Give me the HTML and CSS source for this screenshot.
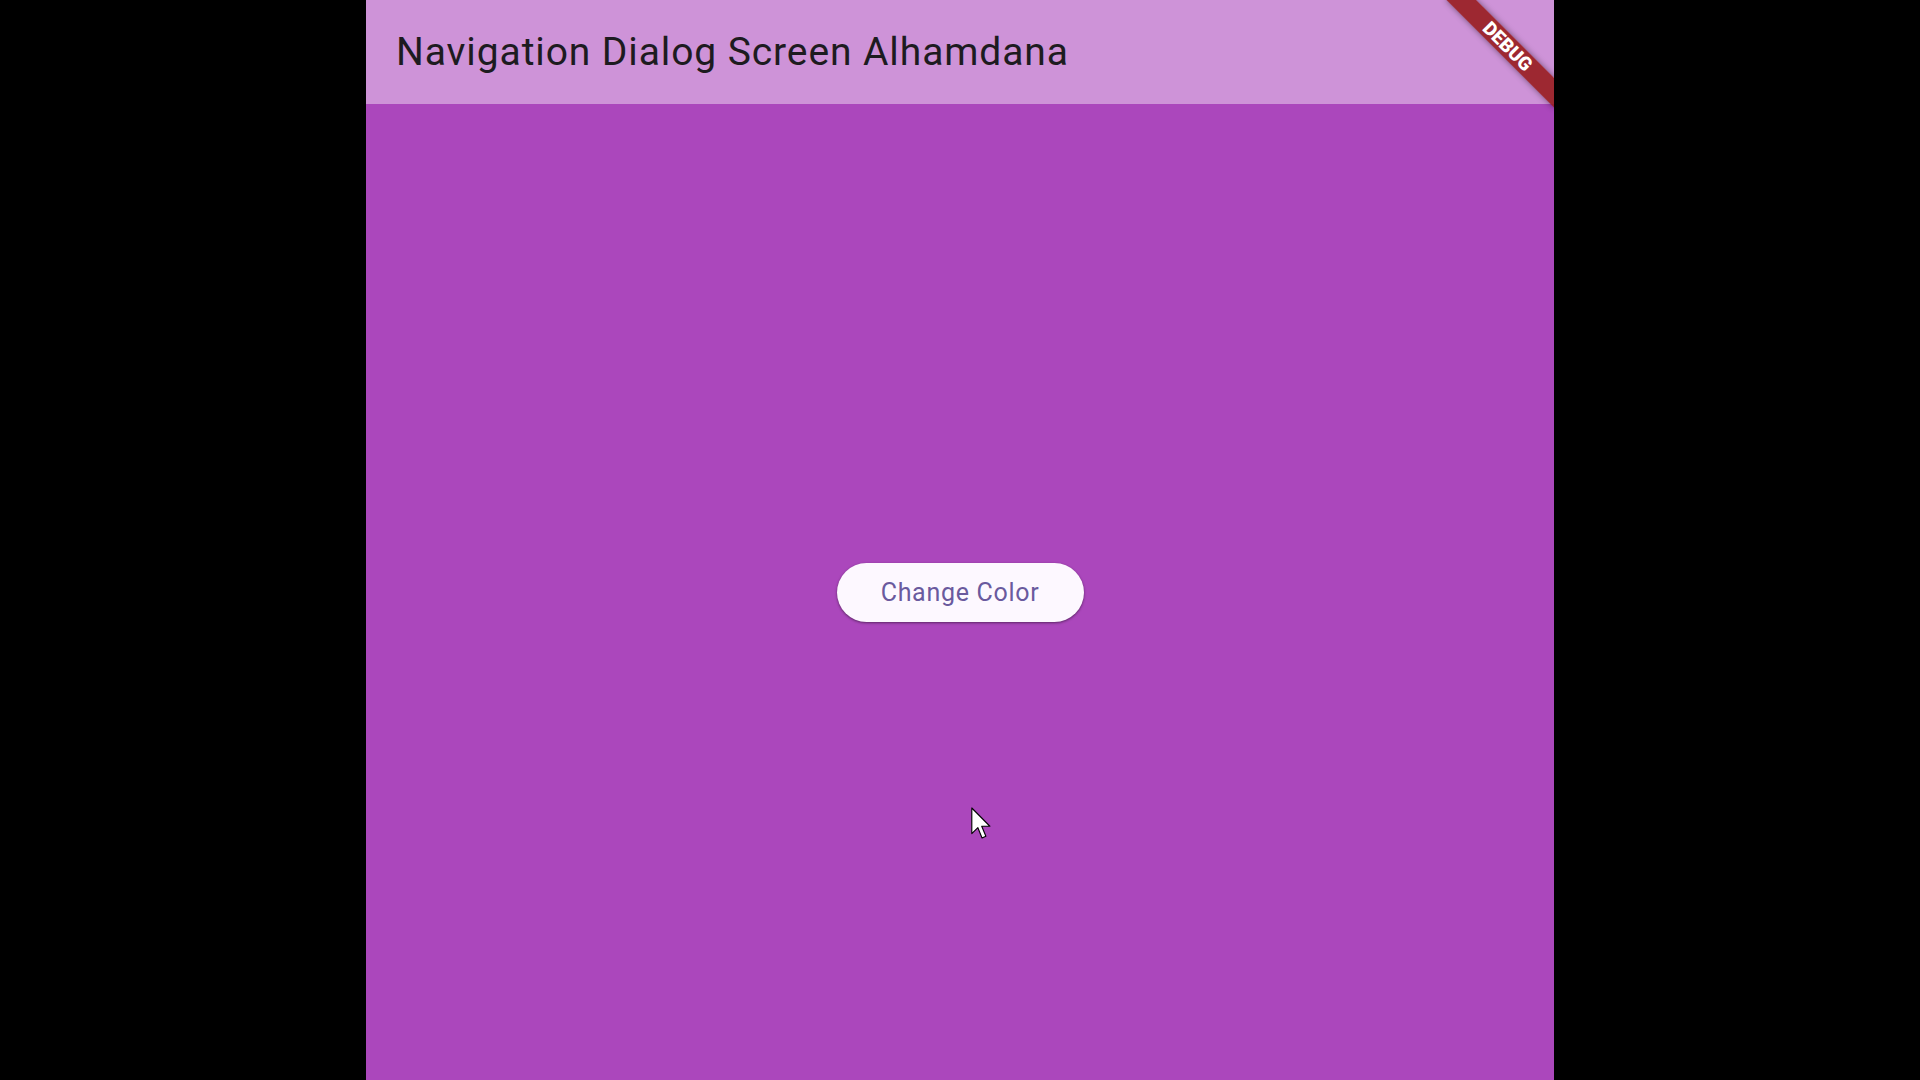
FILE: index.html
```html
<!DOCTYPE html>
<html>
<head>
<meta charset="utf-8">
<link rel="stylesheet" href="styles.css">
</head>
<body>
<div class="stage">
  <div class="app">
    <header class="appbar">
      <h1 class="title">Navigation Dialog Screen Alhamdana</h1>
    </header>
    <main class="content">
      <button class="btn">Change Color</button>
    </main>
    <div class="banner"><span>DEBUG</span></div>
    <svg class="cursor" width="20" height="34" viewBox="0 0 12.5 21">
      <path d="M0.5 0.5 L0.5 16.5 L4.3 12.8 L6.9 19.2 L9.3 18.2 L6.7 11.9 L11.8 11.9 Z" fill="#fff" stroke="#000" stroke-width="0.7" stroke-linejoin="round"/>
    </svg>
  </div>
</div>
</body>
</html>
```
FILE: styles.css
```css
html, body {
  margin: 0;
  padding: 0;
  background: #000;
  height: 100%;
}
.stage {
  display: flex;
  justify-content: center;
  height: 1080px;
}
.app {
  position: relative;
  width: 1188px;
  height: 1080px;
  background: #ab47bc;
  overflow: hidden;
  display: flex;
  flex-direction: column;
  font-family: Roboto, "Noto Sans", sans-serif;
}
.appbar {
  height: 104px;
  box-sizing: border-box;
  background: #ce93d8;
  padding: 33px 0 0 30px;
  flex: none;
}
.title {
  margin: 0;
  font-size: 39px;
  line-height: 39px;
  font-weight: 400;
  letter-spacing: 0.9px;
  color: #1d1b20;
}
.content {
  flex: 1;
  display: flex;
  align-items: center;
  justify-content: center;
}
.btn {
  width: 247px;
  height: 59px;
  border: none;
  border-radius: 30px;
  background: #fdf8ff;
  color: #6a5a9e;
  font-family: Roboto, "Noto Sans", sans-serif;
  font-size: 25px;
  font-weight: 400;
  letter-spacing: 0.7px;
  padding: 0;
  box-shadow: 0 1px 3px rgba(0,0,0,0.3), 0 1px 2px rgba(0,0,0,0.2);
}
.banner {
  position: absolute;
  left: 100%;
  top: 0;
  width: 153px;
  height: 21px;
  transform-origin: 0 0;
  transform: rotate(45deg) translate(-76.5px, 55px);
  background: rgba(150, 25, 25, 0.88);
  box-shadow: 0 0 6px rgba(0,0,0,0.45);
  display: flex;
  align-items: center;
  justify-content: center;
}
.banner span {
  color: #fff;
  font-family: Roboto, "Noto Sans", sans-serif;
  font-weight: 900;
  font-size: 19px;
  line-height: 1;
}
.cursor {
  position: absolute;
  left: 605px;
  top: 807px;
}
```
